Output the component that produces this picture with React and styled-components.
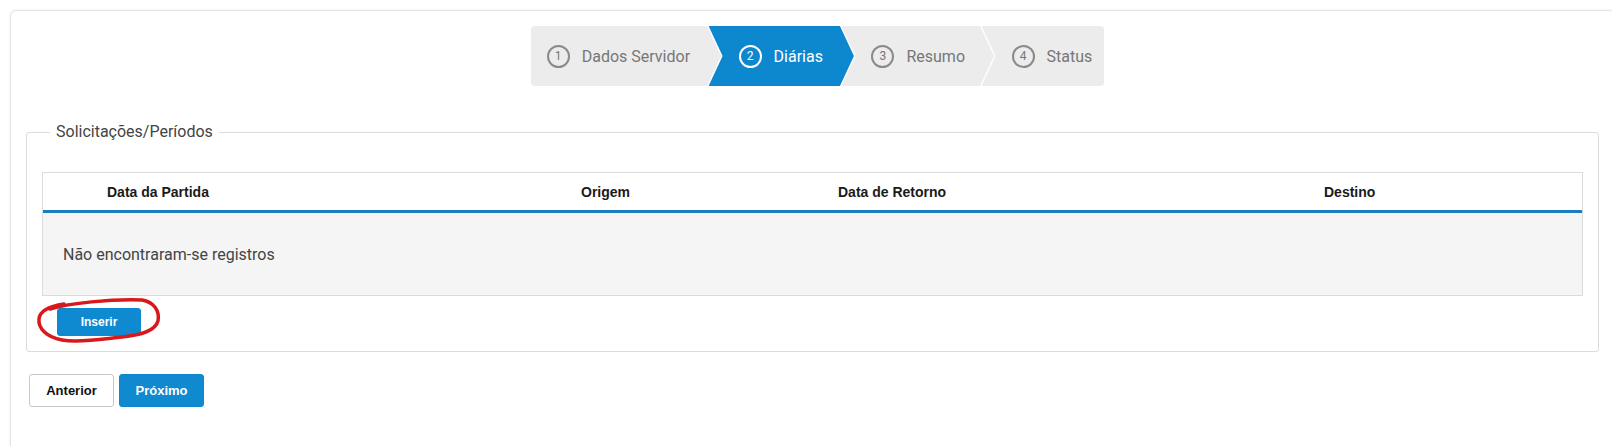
import React from "react";
import styled, { createGlobalStyle } from "styled-components";

const Global = createGlobalStyle`
  html, body { margin: 0; padding: 0; background: #fff; overflow: hidden; }
  body { font-family: Roboto, "Liberation Sans", Arial, sans-serif; }
  * { box-sizing: border-box; }
`;

const Page = styled.div`
  padding: 10px 0 0 10px;
  width: 1612px;
  height: 446px;
`;

const Card = styled.div`
  width: 1605px;
  min-height: 460px;
  border: 1px solid #e3e3e3;
  border-radius: 6px;
  box-shadow: 0 0 3px rgba(0, 0, 0, 0.07);
  padding: 15px 15px 0 15px;
`;

const StepperWrap = styled.div`
  display: flex;
  justify-content: center;
  padding-left: 10px;
`;

const Stepper = styled.div`
  display: flex;
  height: 60px;
`;

const DEPTH = 14;

const Step = styled.div`
  display: flex;
  align-items: center;
  gap: 12px;
  height: 60px;
  background: ${(p) => (p.$active ? "#0d87ce" : "#ececec")};
  color: ${(p) => (p.$active ? "#fff" : "#777")};
  font-size: 16px;
  padding-left: ${(p) => (p.$first ? 16 : DEPTH + 16)}px;
  padding-right: ${(p) => p.$pr}px;
  margin-left: ${(p) => (p.$first ? 0 : -(DEPTH - 1.5))}px;
  border-radius: ${(p) => (p.$first ? "4px 0 0 4px" : p.$last ? "0 4px 4px 0" : "0")};
  clip-path: ${(p) =>
    p.$last
      ? `polygon(0 0, 100% 0, 100% 100%, 0 100%, ${DEPTH}px 50%)`
      : p.$first
      ? `polygon(0 0, calc(100% - ${DEPTH}px) 0, 100% 50%, calc(100% - ${DEPTH}px) 100%, 0 100%)`
      : `polygon(0 0, calc(100% - ${DEPTH}px) 0, 100% 50%, calc(100% - ${DEPTH}px) 100%, 0 100%, ${DEPTH}px 50%)`};
`;

const StepNum = styled.span`
  width: 23px;
  height: 23px;
  border-radius: 50%;
  border: 2px solid ${(p) => (p.$active ? "#fff" : "#8a8a8a")};
  display: flex;
  align-items: center;
  justify-content: center;
  font-size: 12px;
  line-height: 1;
  flex: none;
`;

const Fieldset = styled.fieldset`
  margin: 36px 0 0 0;
  border: 1px solid #dcdcdc;
  border-radius: 3px;
  padding: 30px 15px 15px 15px;
  min-width: 0;
`;

const Legend = styled.legend`
  margin-left: 8px;
  padding: 0 6px;
  font-size: 16px;
  color: #444;
  line-height: 20px;
`;

const Table = styled.div`
  border: 1px solid #dcdcdc;
`;

const HeadRow = styled.div`
  display: grid;
  grid-template-columns: 474px 257px 486px 1fr;
  padding-left: 64px;
  height: 40px;
  align-items: center;
  background: #fff;
  border-bottom: 3px solid #1a7dbf;
`;

const HeadCell = styled.div`
  font-family: "Liberation Sans", Arial, sans-serif;
  font-weight: bold;
  font-size: 14px;
  color: #1a1a1a;
`;

const EmptyRow = styled.div`
  background: #f5f5f5;
  height: 82px;
  display: flex;
  align-items: center;
  padding-left: 20px;
  font-size: 16px;
  color: #444;
`;

const Actions = styled.div`
  position: relative;
  margin-top: 12px;
  padding-left: 15px;
  display: flex;
`;

const Button = styled.button`
  font-family: "Liberation Sans", Arial, sans-serif;
  font-weight: bold;
  font-size: ${(p) => (p.$small ? 12 : 13)}px;
  width: ${(p) => (p.$small ? 84 : 85)}px;
  height: ${(p) => (p.$small ? 28 : 33)}px;
  border-radius: 3px;
  cursor: pointer;
  border: 1px solid ${(p) => (p.$primary ? "#0d87ce" : "#c8c8c8")};
  background: ${(p) => (p.$primary ? "#0f89cf" : "#fff")};
  color: ${(p) => (p.$primary ? "#fff" : "#111")};
  padding: 0;
`;

const Scribble = styled.svg`
  position: absolute;
  left: -12px;
  top: -13px;
  pointer-events: none;
  overflow: visible;
`;

const Footer = styled.div`
  display: flex;
  gap: 5px;
  margin: 22px 0 0 3px;
`;

const steps = [
  { n: 1, label: "Dados Servidor", pr: 31 },
  { n: 2, label: "Diárias", active: true, pr: 31 },
  { n: 3, label: "Resumo", pr: 29 },
  { n: 4, label: "Status", pr: 12 },
];

export default function App() {
  return (
    <Page>
      <Global />
      <Card>
        <StepperWrap>
          <Stepper>
            {steps.map((s, i) => (
              <Step
                key={s.n}
                $active={s.active}
                $first={i === 0}
                $last={i === steps.length - 1}
                $pr={s.pr}
              >
                <StepNum $active={s.active}>{s.n}</StepNum>
                <span>{s.label}</span>
              </Step>
            ))}
          </Stepper>
        </StepperWrap>

        <Fieldset>
          <Legend>Solicitações/Períodos</Legend>
          <Table>
            <HeadRow>
              <HeadCell>Data da Partida</HeadCell>
              <HeadCell>Origem</HeadCell>
              <HeadCell>Data de Retorno</HeadCell>
              <HeadCell>Destino</HeadCell>
            </HeadRow>
            <EmptyRow>Não encontraram-se registros</EmptyRow>
          </Table>
          <Actions>
            <Button $primary $small>Inserir</Button>
            <Scribble width="135" height="57" viewBox="0 0 135 57">
              <path
                d="M 20 14 C 40 8, 80 4, 112 5 C 124 7, 130 16, 128 26 C 125 36, 112 40, 92 42 C 72 44, 50 48, 32 45 C 16 42, 8 33, 9 24 C 10 15, 20 11, 34 9"
                fill="none"
                stroke="#d9181b"
                strokeWidth="3.5"
                strokeLinecap="round"
                strokeLinejoin="round"
              />
            </Scribble>
          </Actions>
        </Fieldset>

        <Footer>
          <Button>Anterior</Button>
          <Button $primary>Próximo</Button>
        </Footer>
      </Card>
    </Page>
  );
}
